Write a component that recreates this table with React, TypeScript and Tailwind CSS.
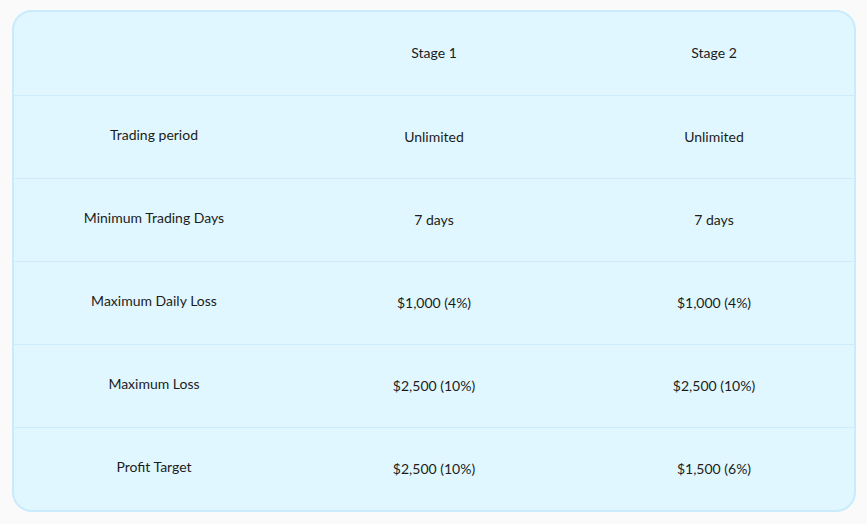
const rows = [
  { label: 'Trading period', s1: 'Unlimited', s2: 'Unlimited' },
  { label: 'Minimum Trading Days', s1: '7 days', s2: '7 days' },
  { label: 'Maximum Daily Loss', s1: '$1,000 (4%)', s2: '$1,000 (4%)' },
  { label: 'Maximum Loss', s1: '$2,500 (10%)', s2: '$2,500 (10%)' },
  { label: 'Profit Target', s1: '$2,500 (10%)', s2: '$1,500 (6%)' },
];

export default function App() {
  return (
    <div className="min-h-screen bg-[#fafafa] px-3 pt-[10px] font-['Lato',sans-serif] text-[14px] text-[#1c1c1c]">
      <div className="w-[844px] rounded-[20px] border-2 border-[#c9ebfb] bg-[#e1f7ff] overflow-hidden">
        <div className="grid grid-cols-3 h-[83px] items-center text-center pb-[2px]">
          <div />
          <div>Stage 1</div>
          <div>Stage 2</div>
        </div>
        {rows.map((r) => (
          <div
            key={r.label}
            className="grid grid-cols-3 h-[83px] items-center text-center border-t border-[#cdedfb]"
          >
            <div className="pb-[6px]">{r.label}</div>
            <div className="pb-[2px]">{r.s1}</div>
            <div className="pb-[2px]">{r.s2}</div>
          </div>
        ))}
      </div>
    </div>
  );
}
